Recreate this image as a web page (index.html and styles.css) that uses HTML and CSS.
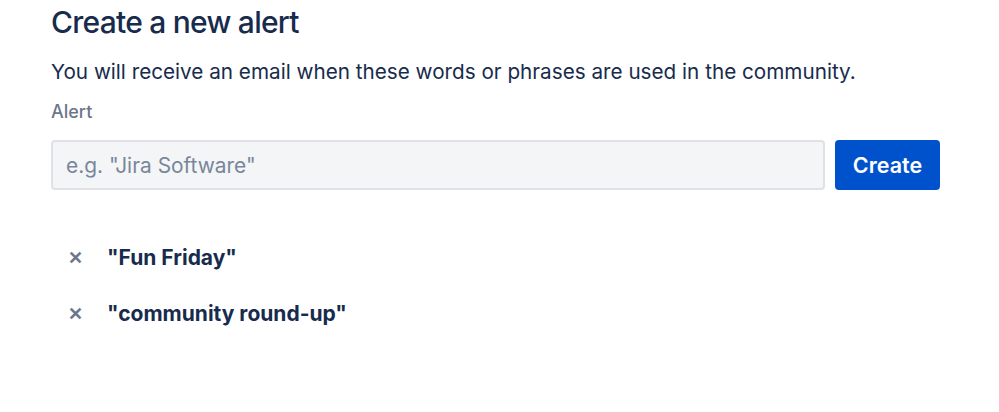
FILE: index.html
```html
<!DOCTYPE html>
<html lang="en">
<head>
    <meta charset="UTF-8">
    <meta name="viewport" content="width=device-width, initial-scale=1.0">
    <title>Create a new alert</title>
    <link rel="stylesheet" href="styles.css">
</head>
<body>
    <div class="container">
        <h1>Create a new alert</h1>
        <p class="intro">You will receive an email when these words or phrases are used in the community.</p>
        <label class="field-label" for="alert">Alert</label>
        <div class="alert-form">
            <input type="text" id="alert" placeholder='e.g. "Jira Software"'>
            <button class="btn-primary">Create</button>
        </div>
        <ul class="alerts">
            <li>
                <span class="remove">&#x2715;</span>
                <span class="phrase">"Fun Friday"</span>
            </li>
            <li>
                <span class="remove">&#x2715;</span>
                <span class="phrase">"community round-up"</span>
            </li>
        </ul>
    </div>
</body>
</html>
```

FILE: styles.css
```css
body {
    font-family: Inter, "Noto Sans", sans-serif;
    margin: 0;
    padding: 0 51px;
    background-color: #fff;
    color: #172b4d;
}
.container {
    width: 889px;
}
h1 {
    font-size: 30px;
    font-weight: 500;
    margin: 2px 0 0;
    line-height: 40px;
    letter-spacing: -0.75px;
}
.intro {
    font-size: 20.7px;
    line-height: 28px;
    margin: 16px 0 0;
}
.field-label {
    display: block;
    font-size: 18px;
    font-weight: 500;
    color: #6b778c;
    margin-top: 14px;
    line-height: 24px;
}
.alert-form {
    display: flex;
    gap: 10px;
    margin-top: 16px;
}
.alert-form input {
    flex: 1;
    height: 50px;
    box-sizing: border-box;
    border: 2px solid #dfe1e6;
    border-radius: 4px;
    background-color: #f4f5f7;
    padding: 0 13px;
    font-family: inherit;
    font-size: 20.9px;
    color: #172b4d;
}
.alert-form input::placeholder {
    color: #7a869a;
}
.btn-primary {
    width: 105px;
    height: 50px;
    border: none;
    border-radius: 4px;
    background-color: #0052cc;
    color: #fff;
    font-family: inherit;
    font-size: 21.5px;
    font-weight: 600;
}
.alerts {
    list-style: none;
    padding: 0;
    margin: 39px 0 0 17px;
}
.alerts li {
    display: flex;
    align-items: center;
    height: 56px;
}
.remove {
    width: 39px;
    color: #6b778c;
    font-size: 18px;
    font-weight: 700;
}
.phrase {
    font-size: 21px;
    font-weight: 700;
}
```
